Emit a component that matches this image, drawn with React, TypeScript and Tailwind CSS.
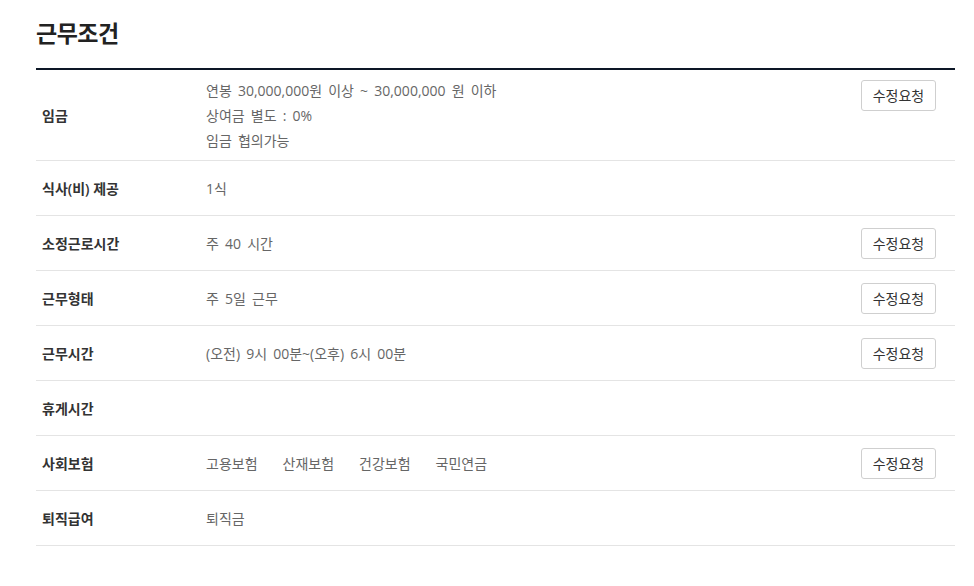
import type { ReactNode } from 'react';

type Row = {
  label: string;
  value: ReactNode;
  editable?: boolean;
  tall?: boolean;
};

const rows: Row[] = [
  {
    label: '임금',
    tall: true,
    editable: true,
    value: (
      <div className="flex flex-col">
        <span className="leading-[25px]">연봉 30,000,000원 이상 ~ 30,000,000 원 이하</span>
        <span className="leading-[25px]">상여금 별도 : 0%</span>
        <span className="leading-[25px]">임금 협의가능</span>
      </div>
    ),
  },
  { label: '식사(비) 제공', value: '1식' },
  { label: '소정근로시간', value: '주 40 시간', editable: true },
  { label: '근무형태', value: '주 5일 근무', editable: true },
  { label: '근무시간', value: '(오전) 9시 00분~(오후) 6시 00분', editable: true },
  { label: '휴게시간', value: '' },
  {
    label: '사회보험',
    editable: true,
    value: (
      <div className="flex gap-[25px]">
        {['고용보험', '산재보험', '건강보험', '국민연금'].map((s) => (
          <span key={s}>{s}</span>
        ))}
      </div>
    ),
  },
  { label: '퇴직급여', value: '퇴직금' },
];

export default function App() {
  return (
    <div
      className="min-h-[586px] bg-white pl-9 pr-[19px] pt-[17px]"
      style={{ fontFamily: '"Open Sans", "Noto Sans CJK KR", sans-serif' }}
    >
      {/* Title */}
      <h2 className="text-[23px] font-bold text-[#222] leading-[32px] tracking-[-0.5px]">근무조건</h2>

      <div className="mt-[19px] border-t-2 border-[#0d1726]">
        {rows.map((row) => (
          <div
            key={row.label}
            className={`flex border-b border-[#e4e4e4] pr-[19px] ${
              row.tall ? 'min-h-[91px] items-stretch' : 'h-[55px] items-center'
            }`}
          >
            <div className="flex w-[170px] shrink-0 items-center pl-[6px] text-[14px] font-semibold text-[#333]">
              {row.label}
            </div>
            <div
              className={`flex flex-1 text-[14px] text-[#666] [word-spacing:2.5px] ${
                row.tall ? 'items-center py-[7px]' : 'items-center'
              }`}
            >
              {row.value}
            </div>
            {row.editable && (
              <div className={`shrink-0 ${row.tall ? 'pt-[10px]' : ''}`}>
                <button className="h-[31px] w-[75px] rounded-[3px] border border-[#cfcfcf] bg-white text-[14px] text-[#333]">
                  수정요청
                </button>
              </div>
            )}
          </div>
        ))}
      </div>
    </div>
  );
}
